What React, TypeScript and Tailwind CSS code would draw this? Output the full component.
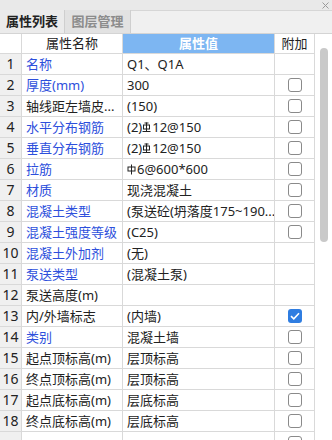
import React from 'react';

type Row = {
  name: string;
  blue?: boolean;
  value: React.ReactNode;
  box?: 'off' | 'on';
};

// rebar grade symbols drawn as tiny glyphs
function Hpb() {
  return (
    <svg width="9" height="11" viewBox="0 0 9 11" className="inline-block align-[-1px] mr-[1px]">
      <rect x="1" y="3" width="7" height="4" fill="none" stroke="#222" strokeWidth="1" />
      <line x1="4.5" y1="0.5" x2="4.5" y2="10.5" stroke="#222" strokeWidth="1" />
    </svg>
  );
}

function Hrb() {
  return (
    <svg width="9" height="11" viewBox="0 0 9 11" className="inline-block align-[-1px] mr-[1px]">
      <rect x="1.5" y="3" width="6" height="4" fill="none" stroke="#222" strokeWidth="1" />
      <line x1="4.5" y1="0.5" x2="4.5" y2="9" stroke="#222" strokeWidth="1" />
      <line x1="0.5" y1="9.5" x2="8.5" y2="9.5" stroke="#222" strokeWidth="1" />
      <line x1="2.5" y1="1" x2="6.5" y2="1" stroke="#222" strokeWidth="1" />
    </svg>
  );
}

const rows: Row[] = [
  { name: '名称', blue: true, value: 'Q1、Q1A' },
  { name: '厚度(mm)', blue: true, value: '300', box: 'off' },
  { name: '轴线距左墙皮...', value: '(150)', box: 'off' },
  { name: '水平分布钢筋', blue: true, value: <>(2)<Hrb />12@150</>, box: 'off' },
  { name: '垂直分布钢筋', blue: true, value: <>(2)<Hrb />12@150</>, box: 'off' },
  { name: '拉筋', blue: true, value: <><Hpb />6@600*600</>, box: 'off' },
  { name: '材质', blue: true, value: '现浇混凝土', box: 'off' },
  { name: '混凝土类型', blue: true, value: '(泵送砼(坍落度175~190...', box: 'off' },
  { name: '混凝土强度等级', blue: true, value: '(C25)', box: 'off' },
  { name: '混凝土外加剂', blue: true, value: '(无)' },
  { name: '泵送类型', blue: true, value: '(混凝土泵)' },
  { name: '泵送高度(m)', value: '' },
  { name: '内/外墙标志', value: '(内墙)', box: 'on' },
  { name: '类别', blue: true, value: '混凝土墙', box: 'off' },
  { name: '起点顶标高(m)', value: '层顶标高', box: 'off' },
  { name: '终点顶标高(m)', value: '层顶标高', box: 'off' },
  { name: '起点底标高(m)', value: '层底标高', box: 'off' },
  { name: '终点底标高(m)', value: '层底标高', box: 'off' },
];

function Check({ on }: { on: boolean }) {
  if (on) {
    return (
      <span className="w-[14px] h-[14px] rounded-[3px] bg-[#2f7de1] flex items-center justify-center">
        <svg width="10" height="8" viewBox="0 0 10 8">
          <path d="M1 4.2 L3.8 6.8 L9 1.2" fill="none" stroke="#fff" strokeWidth="1.6" />
        </svg>
      </span>
    );
  }
  return <span className="w-[14px] h-[14px] rounded-[3px] border border-[#8a8a8a] bg-white" />;
}

export default function App() {
  return (
    <div
      className="w-[332px] h-[440px] overflow-hidden bg-white text-[13px] text-[#222] flex flex-col"
      style={{ fontFamily: "'Noto Sans', 'Noto Sans CJK SC', sans-serif" }}
    >
      {/* title strip */}
      <div className="h-[11px] shrink-0 bg-[#e9e9e9] border-b border-[#d6d6d6] flex justify-end items-center pr-[3px]">
        <svg width="7" height="7" viewBox="0 0 7 7">
          <path d="M0.5 0.5 L6.5 6.5 M6.5 0.5 L0.5 6.5" stroke="#9a9a9a" strokeWidth="1" />
        </svg>
      </div>

      {/* tabs */}
      <div className="h-[23px] shrink-0 bg-[#f0f0f0] flex items-end border-b border-[#d4d4d4]">
        <div className="h-[23px] w-[65px] bg-[#ebebeb] border-r border-[#cfcfcf] flex items-center justify-center font-bold text-[13px] text-[#222]">
          属性列表
        </div>
        <div className="h-[23px] w-[66px] bg-[#e2e2e2] border-r border-[#cfcfcf] flex items-center justify-center font-bold text-[13px] text-[#8c8c8c]">
          图层管理
        </div>
      </div>

      {/* table + scrollbar */}
      <div className="flex flex-1 min-h-0">
        <div className="w-[315px] shrink-0">
          <div className="grid grid-cols-[22px_101px_152px_40px] h-[20px]">
            <div className="bg-white border-r border-b border-[#d9d9d9]" />
            <div className="border-r border-b border-[#d9d9d9] flex items-center justify-center leading-none">属性名称</div>
            <div className="bg-[#7db6f2] border-r border-b border-[#d9d9d9] flex items-center justify-center text-white font-bold leading-none">属性值</div>
            <div className="border-r border-b border-[#d9d9d9] flex items-center justify-center leading-none">附加</div>
          </div>
          {rows.map((r, i) => (
            <div key={i} className="grid grid-cols-[22px_101px_152px_40px] h-[21px]">
              <div className="bg-[#f0f0f0] border-r border-b border-[#d9d9d9] flex items-center justify-center text-[14px] leading-none">
                {i + 1}
              </div>
              <div
                className={`border-r border-b border-[#d9d9d9] flex items-center pl-[4px] whitespace-nowrap overflow-hidden leading-none ${
                  r.blue ? 'text-[#2d4fdc]' : 'text-[#222]'
                }`}
              >
                {r.name}
              </div>
              <div className="border-r border-b border-[#d9d9d9] flex items-center pl-[4px] whitespace-nowrap overflow-hidden leading-none">
                {r.value}
              </div>
              <div className="border-r border-b border-[#d9d9d9] flex items-center justify-center">
                {r.box && <Check on={r.box === 'on'} />}
              </div>
            </div>
          ))}
          {/* next row, only its top edge is in view */}
          <div className="grid grid-cols-[22px_101px_152px_40px] h-[21px]">
            <div className="bg-[#f0f0f0] border-r border-[#d9d9d9]" />
            <div className="border-r border-[#d9d9d9]" />
            <div className="border-r border-[#d9d9d9]" />
            <div className="border-r border-[#d9d9d9] flex items-center justify-center">
              <Check on={false} />
            </div>
          </div>
        </div>
        <div className="flex-1 bg-white flex justify-center pt-[14px]">
          <div className="w-[8px] h-[194px] rounded-full bg-[#c9c9c9]" />
        </div>
      </div>
    </div>
  );
}
